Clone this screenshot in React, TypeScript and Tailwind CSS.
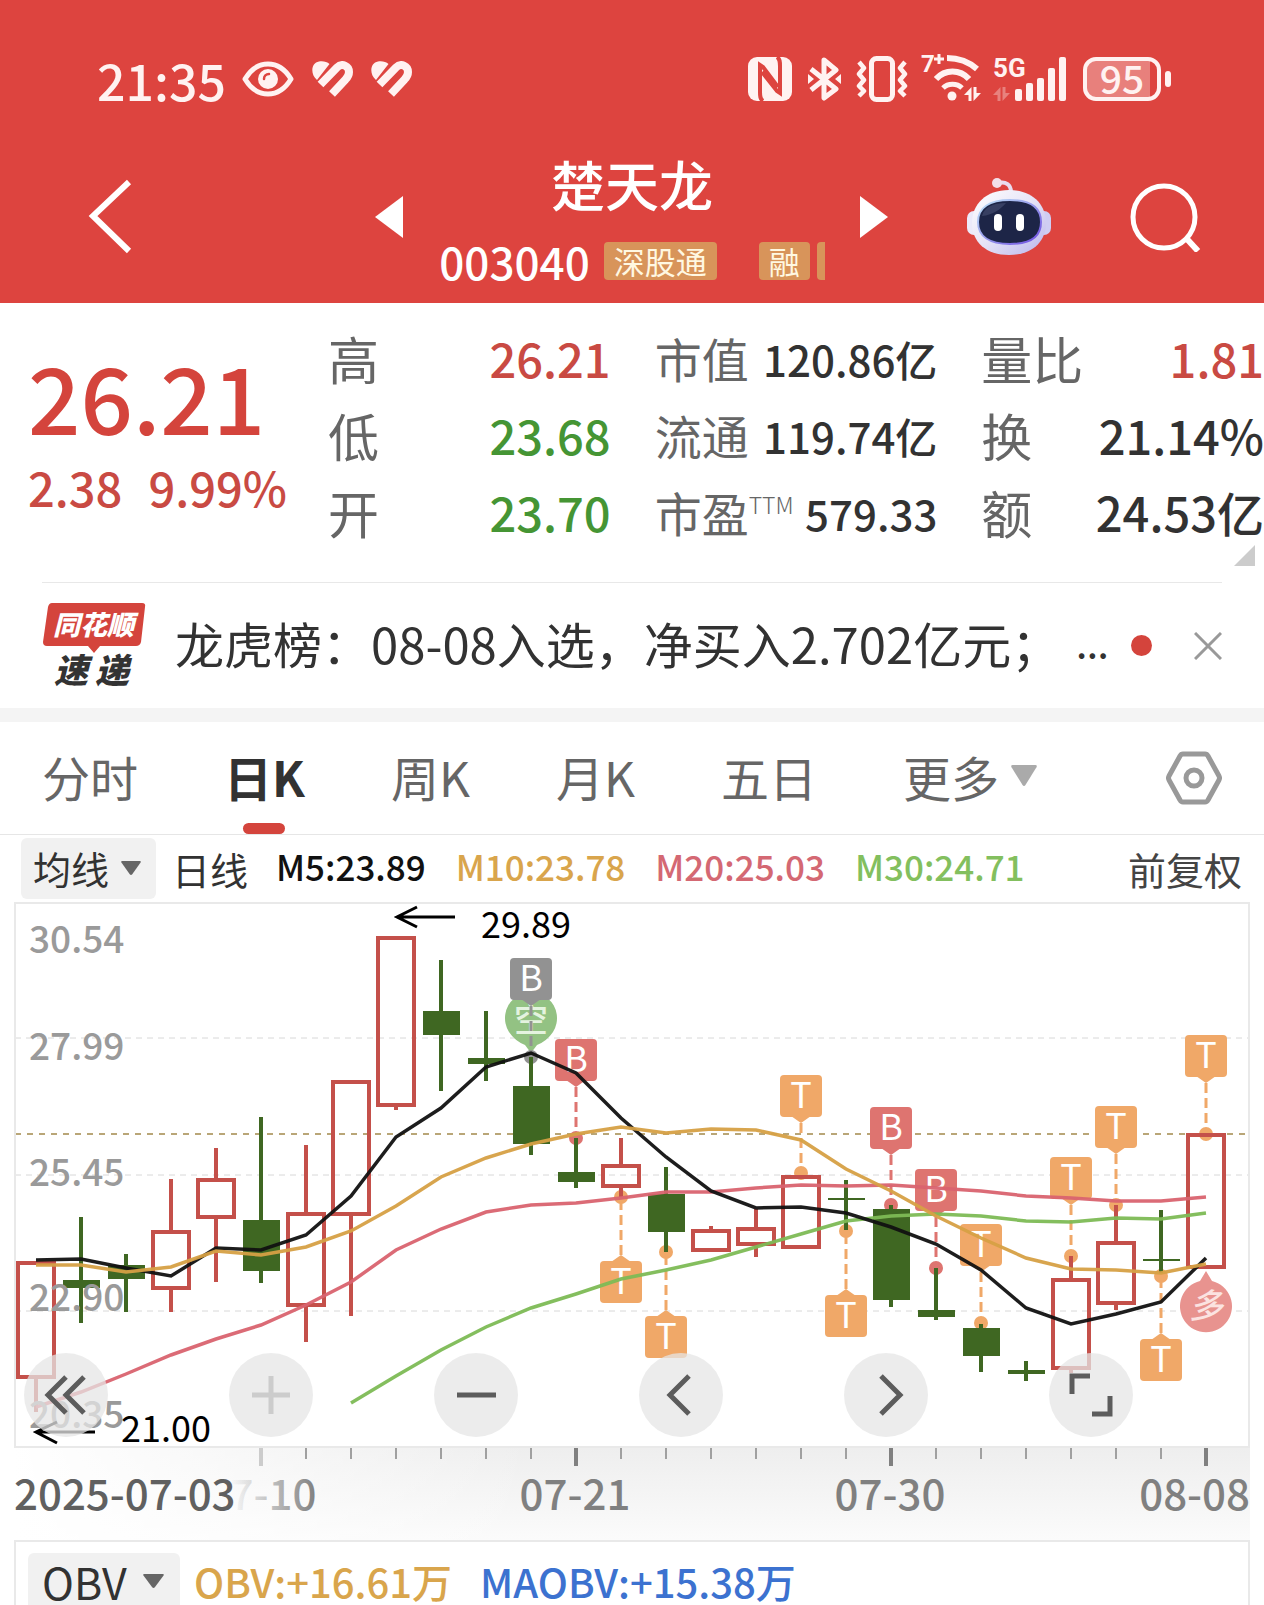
import React, { useState } from 'react';

type Candle = [high: number, top: number, bottom: number, low: number, up: boolean];

interface Flag {
  i: number;
  letter: 'B' | 'T';
  box: number;
  dot: number;
  color: string;
}

const UP = '#c4504a';
const DOWN = '#3f6722';

const STEP = 45;
const x = (i: number) => 21 + i * STEP;

const candles: Candle[] = [
  [360, 360, 474, 509, true],
  [314, 377, 385, 420, false],
  [351, 362, 376, 409, false],
  [276, 329, 385, 409, true],
  [245, 277, 314, 379, true],
  [214, 317, 368, 380, false],
  [242, 311, 402, 439, true],
  [179, 179, 311, 413, true],
  [35, 35, 202, 207, true],
  [57, 108, 132, 188, false],
  [108, 155, 161, 178, false],
  [154, 183, 241, 252, false],
  [235, 269, 279, 285, false],
  [235, 263, 283, 294, true],
  [264, 291, 329, 349, false],
  [323, 328, 347, 347, true],
  [306, 326, 341, 354, true],
  [274, 274, 344, 344, true],
  [277, 295, 297, 327, false],
  [302, 306, 397, 404, false],
  [365, 407, 414, 417, false],
  [421, 425, 453, 469, false],
  [458, 467, 471, 478, false],
  [353, 377, 465, 470, true],
  [302, 340, 400, 407, true],
  [307, 356, 358, 370, false],
  [232, 232, 364, 364, true],
];

const averages = [
  {
    color: '#d9636f',
    start: 0,
    values: [504, 489, 471, 452, 436, 422, 402, 379, 347, 326, 309, 302, 300, 295, 289, 289, 285, 282, 283, 282, 285, 288, 293, 295, 298, 298, 294],
  },
  {
    color: '#7dbb55',
    start: 7,
    values: [500, 473, 447, 424, 405, 391, 376, 367, 357, 344, 331, 318, 313, 311, 313, 318, 319, 315, 316, 310],
  },
  {
    color: '#111111',
    start: 0,
    values: [357, 356, 365, 373, 345, 347, 332, 293, 234, 205, 164, 150, 170, 215, 254, 288, 305, 304, 310, 324, 341, 367, 405, 421, 411, 399, 355],
  },
  {
    color: '#d6a045',
    start: 0,
    values: [362, 362, 369, 364, 348, 352, 344, 328, 303, 274, 255, 241, 231, 224, 230, 226, 227, 237, 266, 288, 313, 335, 355, 366, 367, 370, 361],
  },
];

const flags: Flag[] = [
  { i: 11, letter: 'B', box: 55, dot: 154, color: '#929292' },
  { i: 12, letter: 'B', box: 136, dot: 235, color: '#de7470' },
  { i: 13, letter: 'T', box: 358, dot: 294, color: '#f0a868' },
  { i: 14, letter: 'T', box: 413, dot: 349, color: '#f0a868' },
  { i: 17, letter: 'T', box: 172, dot: 270, color: '#f0a868' },
  { i: 18, letter: 'T', box: 392, dot: 328, color: '#f0a868' },
  { i: 19, letter: 'B', box: 204, dot: 302, color: '#de7470' },
  { i: 20, letter: 'B', box: 266, dot: 365, color: '#de7470' },
  { i: 21, letter: 'T', box: 321, dot: 420, color: '#f0a868' },
  { i: 23, letter: 'T', box: 254, dot: 353, color: '#f0a868' },
  { i: 24, letter: 'T', box: 203, dot: 302, color: '#f0a868' },
  { i: 25, letter: 'T', box: 436, dot: 373, color: '#f0a868' },
  { i: 26, letter: 'T', box: 132, dot: 231, color: '#f0a868' },
];

const priceLabels = [
  { text: '30.54', y: 50 },
  { text: '27.99', y: 157 },
  { text: '25.45', y: 283 },
  { text: '22.90', y: 408 },
  { text: '20.35', y: 525 },
];

const quotes = [
  {
    labelSize: 'text-[51px]',
    valueSize: 'text-[47px]',
    rows: [
      { label: '高', value: '26.21', color: 'text-[#c94a43]' },
      { label: '低', value: '23.68', color: 'text-[#459534]' },
      { label: '开', value: '23.70', color: 'text-[#459534]' },
    ],
  },
  {
    labelSize: 'text-[47px]',
    valueSize: 'text-[42px]',
    rows: [
      { label: '市值', value: '120.86亿', color: 'text-[#323232]' },
      { label: '流通', value: '119.74亿', color: 'text-[#323232]' },
      { label: '市盈', sup: 'TTM', value: '579.33', color: 'text-[#323232]' },
    ],
  },
  {
    labelSize: 'text-[51px]',
    valueSize: 'text-[47px]',
    rows: [
      { label: '量比', value: '1.81', color: 'text-[#c94a43]' },
      { label: '换', value: '21.14%', color: 'text-[#323232]' },
      { label: '额', value: '24.53亿', color: 'text-[#323232]' },
    ],
  },
];

const tabs = ['分时', '日K', '周K', '月K', '五日'];

const Caret = ({ className }: { className?: string }) => (
  <svg viewBox="0 0 24 18" className={className} preserveAspectRatio="none" fill="currentColor" aria-hidden="true">
    <path d="M1.500 0h21q2 0 1 2L13.500 17q-1.500 2-3 0L.5 2q-1-2 1-2z" />
  </svg>
);

const HeartStripes = () => (
  <svg width="41" height="36" viewBox="0 0 41 36" fill="none" aria-hidden="true">
    <path d="M5 19C-2 13-1 2 7 .5c4-.8 8 .3 10.500 2.500z" fill="#fff2f1" />
    <path d="M8.500 23.500 25 6.500c5-5 12-1.500 12 4.500 0 3-1.500 5.500-3.500 7.500L20 33" stroke="#fff2f1" strokeWidth="8" />
  </svg>
);

const DataArrows = ({ className }: { className?: string }) => (
  <svg width="17" height="14" viewBox="0 0 17 14" className={className} fill="currentColor" aria-hidden="true">
    <path d="M7.500 0v14H4.500V8H0zM9.500 0v14L17 6h-4.500V0z" />
  </svg>
);

const StatusBar = () => (
  <div className="flex h-[132px] items-center justify-between pt-[26px] pr-[93px] pl-[97px] text-[#fff2f1]">
    <div className="flex items-center">
      <span className="text-[50px] leading-[60px] font-medium">21:35</span>
      <svg className="ml-4" width="52" height="36" viewBox="0 0 52 36" fill="none" aria-hidden="true">
        <path d="M3 18C9 8 17 3 26 3s17 5 23 15C43 28 35 33 26 33S9 28 3 18z" stroke="currentColor" strokeWidth="5" strokeLinejoin="round" />
        <circle cx="26" cy="18" r="10" fill="currentColor" />
        <path d="M22 18c0-3 2-5 5-5" stroke="#dd443f" strokeWidth="2.500" strokeLinecap="round" />
      </svg>
      <span className="ml-[18px] flex gap-[18px]">
        <HeartStripes />
        <HeartStripes />
      </span>
    </div>

    <div className="flex items-center">
      <svg width="44" height="44" viewBox="0 0 44 44" fill="none" aria-hidden="true">
        <rect width="44" height="44" rx="9" fill="currentColor" />
        <path d="M15 44c-3-2-3-5-3-9V8l3 2 15 20M29 0c3 2 3 5 3 9v27l-3-2L14 15" stroke="#dd443f" strokeWidth="4" />
      </svg>
      <svg className="ml-4" width="33" height="44" viewBox="0 0 33 44" fill="none" aria-hidden="true">
        <path d="M3 12 28 32 16 41V3l12 10L3 33" stroke="currentColor" strokeWidth="5" strokeLinejoin="round" />
        <path d="m0 17 6 5-6 5zM33 17l-6 5 6 5z" fill="currentColor" />
      </svg>
      <svg className="ml-[15px]" width="52" height="46" viewBox="0 0 52 46" fill="none" stroke="currentColor" aria-hidden="true">
        <rect x="15.500" y="2.500" width="21" height="41" rx="5" strokeWidth="5" />
        <path d="m3 6 5 6-5 6 5 6-5 6 5 5-5 5M49 6l-5 6 5 6-5 6 5 6-5 5 5 5" strokeWidth="4.500" strokeLinejoin="round" />
      </svg>
      <div className="relative -mt-1 ml-[14px]">
        <svg className="overflow-visible" width="59" height="48" viewBox="0 0 59 48" fill="none" aria-hidden="true">
          <text x="-1" y="19" fontSize="24" fontFamily="Roboto" fontWeight="700" fill="currentColor">7</text>
          <path d="M17 1v10M12 6h10" stroke="currentColor" strokeWidth="3" />
          <g stroke="currentColor" strokeWidth="6">
            <path d="M25 5c12 0 22 4 30 11" />
            <path d="M14 26c9-10 24-10 33 0" />
            <path d="M21 35c5-5 14-5 19 0" strokeWidth="5" />
          </g>
          <circle cx="30" cy="43" r="4.500" fill="currentColor" />
        </svg>
        <DataArrows className="absolute right-0 bottom-0" />
      </div>
      <div className="relative ml-3">
        <svg className="overflow-visible" width="73" height="44" viewBox="0 0 73 44" fill="currentColor" aria-hidden="true">
          <text x="0" y="20" fontSize="26" fontFamily="Roboto" fontWeight="700">5G</text>
          <rect x="22" y="32" width="7" height="12" rx="2" />
          <rect x="33" y="26" width="7" height="18" rx="2" />
          <rect x="44" y="21" width="7" height="23" rx="2" />
          <rect x="55" y="11" width="7" height="33" rx="2" />
          <rect x="66" y="0" width="7" height="44" rx="2" />
        </svg>
        <DataArrows className="absolute bottom-0 left-0 opacity-35" />
      </div>
      <div className="ml-[17px] flex items-center gap-1">
        <div className="flex h-11 w-[78px] items-center justify-center rounded-[13px] border-4 border-[#fff2f1] bg-linear-to-r from-[#e8807c] from-90% to-[#dd443f] to-90% pb-1 text-[39px] leading-[40px] font-medium">
          95
        </div>
        <div className="h-4 w-[6px] rounded-full bg-[#fff2f1]" />
      </div>
    </div>
  </div>
);

const Robot = () => (
  <svg width="84" height="78" viewBox="0 0 84 78" fill="none" aria-hidden="true">
    <defs>
      <linearGradient id="shell" x1="0" y1="0" x2="1" y2="1">
        <stop offset="0" stopColor="#ffffff" />
        <stop offset=".5" stopColor="#e6e3f6" />
        <stop offset="1" stopColor="#b9b5ec" />
      </linearGradient>
      <linearGradient id="rim" x1="0" y1="0" x2="1" y2="1">
        <stop offset="0" stopColor="#bfe6f7" />
        <stop offset="1" stopColor="#6d4be0" />
      </linearGradient>
    </defs>
    <path d="M31 5c8-2 13 2 13 9" stroke="#e9dcef" strokeWidth="4" />
    <circle cx="30" cy="5" r="5" fill="#f3dfe9" />
    <rect x="0" y="33" width="16" height="24" rx="7" fill="#eceafa" />
    <rect x="68" y="33" width="16" height="24" rx="7" fill="#cfcdf3" />
    <path d="M42 12c23 0 37 14 37 33S65 77 42 77 5 64 5 45s14-33 37-33z" fill="url(#shell)" />
    <path d="M43 22c21 0 31 8 31 22s-10 22-31 22-32-8-32-22 11-22 32-22z" fill="#1d2547" stroke="url(#rim)" strokeWidth="2" />
    <path d="M15 38c2-9 11-13 24-13-6 7-14 12-24 13z" fill="#4a5275" opacity=".6" />
    <rect x="27" y="36" width="8" height="17" rx="4" fill="#fff" />
    <rect x="49" y="36" width="8" height="17" rx="4" fill="#fff" />
  </svg>
);

const NavBar = () => (
  <div className="grid h-[171px] grid-cols-[1fr_auto_1fr] items-center pb-[2px] text-white">
    <div className="flex items-center justify-between pr-9 pl-[88px]">
      <button aria-label="返回">
        <svg width="44" height="76" viewBox="0 0 44 76" fill="none" stroke="currentColor" strokeWidth="6">
          <path d="M41 3 5 37l36 35" />
        </svg>
      </button>
      <button aria-label="上一只">
        <svg width="28" height="42" viewBox="0 0 28 42" fill="currentColor">
          <path d="M28 0v42L0 21z" />
        </svg>
      </button>
    </div>

    <div>
      <h1 className="text-center text-[54px] leading-[60px] font-medium">楚天龙</h1>
      <div className="mt-7 flex h-[38px] items-center">
        <span className="text-[44px] leading-[38px] font-medium">003040</span>
        <span className="ml-[14px] rounded bg-[#d8945a] px-[10px] text-[31px] leading-[38px] text-[#fff8e2]">深股通</span>
        <span className="ml-[42px] rounded bg-[#d8945a] px-[10px] text-[31px] leading-[38px] text-[#fff8e2]">融</span>
        <span className="ml-[7px] h-[38px] w-2 rounded-l bg-[#d8945a]" />
      </div>
    </div>

    <div className="flex items-center justify-between pr-[62px] pl-[35px]">
      <button aria-label="下一只">
        <svg width="28" height="42" viewBox="0 0 28 42" fill="currentColor">
          <path d="M0 0v42l28-21z" />
        </svg>
      </button>
      <button aria-label="智能助手">
        <Robot />
      </button>
      <button aria-label="搜索">
        <svg width="72" height="70" viewBox="0 0 72 70" fill="none" stroke="currentColor" strokeWidth="5">
          <circle cx="34" cy="35" r="31" />
          <path d="m56 56 12 13" strokeWidth="6" />
        </svg>
      </button>
    </div>
  </div>
);

const QuotePanel = () => (
  <section className="relative grid grid-cols-[256px_1fr_1fr_1fr] gap-x-11 pt-[17px] pb-[31px] pl-7">
    <div className="pt-[25px] font-medium whitespace-nowrap text-[#d4443c]">
      <p className="text-[92px] leading-[100px]">26.21</p>
      <p className="mt-3 flex gap-[26px] text-[47px] leading-[60px] text-[#c94a43]">
        <span>2.38</span>
        <span>9.99%</span>
      </p>
    </div>
    {quotes.map((column, index) => (
      <dl key={index}>
        {column.rows.map(row => (
          <div key={row.label} className="flex h-[77px] items-center justify-between whitespace-nowrap">
            <dt className={`flex text-[#666666] ${column.labelSize}`}>
              {row.label}
              {row.sup && <sup className="top-0 pt-3 text-[23px] leading-[30px] font-light">{row.sup}</sup>}
            </dt>
            <dd className={`font-medium ${column.valueSize} ${row.color}`}>{row.value}</dd>
          </div>
        ))}
      </dl>
    ))}
    <svg className="absolute right-[9px] bottom-4" width="21" height="21" viewBox="0 0 21 21" aria-hidden="true">
      <path d="M21 0v21H0z" fill="#cccccc" />
    </svg>
  </section>
);

const NewsBar = () => (
  <section>
    <div className="mx-[42px] flex h-[126px] items-center border-t border-[#e8e8e8]">
      <svg className="overflow-visible" width="104" height="84" viewBox="-1 1 104 84" aria-hidden="true">
        <path d="M9 0h90q4 0 3 4l-4 35q-1 4-5 4H57l-6 7-6-7H4q-4 0-4-4L5 4q1-4 4-4z" fill="#d4443c" />
        <text x="10" y="32" fontSize="27" fontWeight="900" fontStyle="italic" fill="#fff">同花顺</text>
        <g fontSize="34" fontWeight="900" fontStyle="italic" fill="#333">
          <text x="11" y="80">速</text>
          <text x="52" y="80">递</text>
        </g>
      </svg>
      <a href="#news" className="ml-[29px] flex flex-1 pb-[6px] text-[49px] leading-[60px] whitespace-nowrap text-[#323232]">
        龙虎榜：08-08入选，净买入2.702亿元；<span className="ml-4 text-[36px] font-medium">...</span>
      </a>
      <span className="h-[21px] w-[21px] rounded-full bg-[#d4443c]" />
      <button aria-label="关闭" className="ml-[42px]">
        <svg width="28" height="28" viewBox="0 0 28 28" fill="none" stroke="#999999" strokeWidth="3">
          <path d="m1 1 26 26M27 1 1 27" />
        </svg>
      </button>
    </div>
    <div className="h-[14px] bg-[#f4f4f4]" />
  </section>
);

const PeriodTabs = () => {
  const [active, setActive] = useState('日K');

  return (
    <nav className="flex h-[113px] items-center justify-between border-b border-[#e6e6e6] pr-[42px] pl-[42px] text-[48px] text-[#666666]">
      <div className="flex h-full gap-[86px]">
        {tabs.map(tab => (
          <button
            key={tab}
            onClick={() => setActive(tab)}
            className={`relative pb-[5px] whitespace-nowrap ${active === tab ? 'font-bold text-[#323232]' : ''}`}
          >
            {tab}
            {active === tab && (
              <span className="absolute bottom-0 left-1/2 h-[11px] w-[42px] -translate-x-1/2 rounded-full bg-[#d4443c]" />
            )}
          </button>
        ))}
        <button className="flex items-center gap-3 pb-[5px] whitespace-nowrap">
          更多
          <Caret className="h-[21px] w-[26px] text-[#aaaaaa]" />
        </button>
      </div>
      <button aria-label="图表设置">
        <svg width="56" height="54" viewBox="0 0 56 54" fill="none" stroke="#999999" strokeWidth="5" strokeLinejoin="round">
          <path d="M17 3h22q2 0 3 2l11 20q1 2 0 4L42 49q-1 2-3 2H17q-2 0-3-2L3 29q-1-2 0-4L14 5q1-2 3-2z" />
          <circle cx="28" cy="27" r="8" />
        </svg>
      </button>
    </nav>
  );
};

const AverageBar = () => (
  <div className="flex h-[67px] items-center pr-[22px] pl-[21px] text-[35px] font-medium whitespace-nowrap">
    <div className="relative">
      <select
        aria-label="指标"
        className="h-[61px] w-[135px] appearance-none rounded-md bg-[#f1f1f1] pb-[2px] pl-3 text-[38px] font-normal text-[#323232]"
      >
        <option>均线</option>
      </select>
      <Caret className="pointer-events-none absolute top-[23px] right-[15px] h-[14px] w-5 text-[#666666]" />
    </div>
    <span className="ml-4 text-[38px] font-normal text-[#323232]">日线</span>
    <div className="ml-7 flex gap-[30px] pb-1">
      <span className="text-[#111111]">M5:23.89</span>
      <span className="text-[#d9a54c]">M10:23.78</span>
      <span className="text-[#d46873]">M20:25.03</span>
      <span className="text-[#83bf5e]">M30:24.71</span>
    </div>
    <button className="ml-auto text-[38px] font-normal text-[#444444]">前复权</button>
  </div>
);

const FlagMark = ({ flag }: { flag: Flag }) => {
  const cx = x(flag.i);
  const above = flag.box < flag.dot;
  const tip = above ? flag.box + 48 : flag.box - 6;

  return (
    <g>
      <path d={`M${cx} ${tip}V${flag.dot}`} stroke={flag.color} strokeWidth="3" strokeDasharray="10 5" />
      <circle cx={cx} cy={flag.dot} r="7" fill={flag.color} />
      <rect x={cx - 21} y={flag.box} width="42" height="42" rx="4" fill={flag.color} />
      <path
        d={above ? `M${cx - 10} ${flag.box + 41}h20l-10 7z` : `M${cx - 10} ${flag.box + 1}h20l-10-7z`}
        fill={flag.color}
      />
      <text x={cx} y={flag.box + 33} fontSize="36" textAnchor="middle" fill="#fff">{flag.letter}</text>
    </g>
  );
};

const CandleMark = ({ candle, i }: { candle: Candle; i: number }) => {
  const [high, top, bottom, low, up] = candle;
  const cx = x(i);

  return up ? (
    <g stroke={UP} strokeWidth="4" fill="none">
      <path d={`M${cx} ${high}V${top}M${cx} ${bottom}V${low}`} />
      <rect x={cx - 18} y={top} width="36" height={bottom - top} />
    </g>
  ) : (
    <g fill={DOWN}>
      <rect x={cx - 2} y={high} width="4" height={low - high} />
      <rect x={cx - 18} y={top} width="37" height={bottom - top} />
    </g>
  );
};

const ChartControls = () => (
  <div className="absolute right-[115px] bottom-[9px] left-[8px] flex justify-between">
    {[
      { label: '最早', path: 'M23 5 5 23l18 18M41 5 23 23l18 18', muted: false },
      { label: '放大', path: 'M23 4v38M4 23h38', muted: true },
      { label: '缩小', path: 'M4 23h39', muted: false },
      { label: '左移', path: 'M31 4 12 23l19 19', muted: false },
      { label: '右移', path: 'm18 4 19 19-19 19', muted: false },
      { label: '全屏', path: 'M4 22V4h18M42 24v18H24', muted: false },
    ].map(control => (
      <button
        key={control.label}
        aria-label={control.label}
        className="flex h-[84px] w-[84px] items-center justify-center rounded-full bg-[#e6e6e6]/75"
      >
        <svg width="46" height="46" viewBox="0 0 46 46" fill="none" stroke={control.muted ? '#cccccc' : '#5c5c5c'} strokeWidth="5">
          <path d={control.path} />
        </svg>
      </button>
    ))}
  </div>
);

const CandleChart = () => (
  <div className="relative border-2 border-[#e9e9e9]">
    <svg viewBox="1 1 1232 542" className="block h-auto w-full" role="img" aria-label="日K线图">
      <g stroke="#d8d8d8" strokeWidth="1" strokeDasharray="6 5">
        <path d="M0 135H1234M0 272H1234M0 408H1234" />
      </g>
      <path d="M0 231H1230" stroke="#b9a677" strokeWidth="2" strokeDasharray="6 6" />

      {/* short / long signal pins */}
      <g fontSize="34" fontWeight="500" textAnchor="middle">
        <path d={`M${x(11) - 22} 129a26 26 0 1 1 44 0q-6 9-16 13l-6 8-6-8q-10-4-16-13z`} fill="#93c283" />
        <text x={x(11)} y="129" fill="#e4f3df">空</text>
        <path d={`M${x(26)} 368l6 10a26 26 0 1 1-12 0z`} fill="#e8938f" />
        <text x={x(26)} y="415" fontStyle="italic" fill="#fbe3e1">多</text>
      </g>

      {flags.map(flag => (
        <FlagMark key={flag.i} flag={flag} />
      ))}
      {candles.map((candle, i) => (
        <CandleMark key={i} candle={candle} i={i} />
      ))}
      {averages.map(line => (
        <polyline
          key={line.color}
          points={line.values.map((y, i) => `${x(line.start + i)},${y}`).join(' ')}
          fill="none"
          stroke={line.color}
          strokeOpacity=".95"
          strokeWidth="3.500"
        />
      ))}

      <g fontSize="37" fontWeight="500" fill="#9a9a9a">
        {priceLabels.map(label => (
          <text key={label.text} x="14" y={label.y}>{label.text}</text>
        ))}
      </g>

      {/* highest and lowest price in range */}
      <g stroke="#000" strokeWidth="3" fill="none">
        <path d="M440 14H382M402 4l-20 10 20 10" />
        <path d="M80 529H21M42 519l-21 10 21 11" />
      </g>
      <g fontSize="36" fill="#000">
        <text x="466" y="35">29.89</text>
        <text x="106" y="539">21.00</text>
      </g>
    </svg>
    <ChartControls />
  </div>
);

const DateAxis = () => (
  <div className="bg-linear-to-b from-[#eeeeee] to-[#fbfbfb]">
    <svg viewBox="0 0 1236 92" className="block h-auto w-full" role="img" aria-label="日期">
      <defs>
        <linearGradient id="axis-fade">
          <stop offset="0" stopColor="#fff" />
          <stop offset="1" stopColor="#fff" stopOpacity="0" />
        </linearGradient>
        <linearGradient id="date-fade">
          <stop offset=".22" stopColor="#808080" stopOpacity="0" />
          <stop offset="1" stopColor="#808080" />
        </linearGradient>
      </defs>
      <rect width="520" height="92" fill="url(#axis-fade)" />
      {candles.map((_, i) => {
        if (i < 5) return null;
        const major = (i - 5) % 7 === 0;
        return (
          <rect
            key={i}
            x={x(i) + (major ? -1 : 0)}
            y="0"
            width={major ? 4 : 2}
            height={major ? 18 : 11}
            fill={i === 5 ? '#cccccc' : major ? '#808080' : '#a0a0a0'}
          />
        );
      })}
      <g fontSize="42" fontWeight="500" fill="#808080">
        <text x={x(5) + 1} y="62" textAnchor="middle" fill="url(#date-fade)">07-10</text>
        <text x="0" y="62" fill="#606060">2025-07-03</text>
        <text x={x(12)} y="62" textAnchor="middle">07-21</text>
        <text x={x(19)} y="62" textAnchor="middle">07-30</text>
        <text x="1236" y="62" textAnchor="end">08-08</text>
      </g>
    </svg>
  </div>
);

const ObvPanel = () => (
  <div className="flex h-[65px] items-end overflow-hidden border-x-2 border-t-2 border-[#e9e9e9] pl-3 text-[40px] font-medium whitespace-nowrap">
    <div className="relative">
      <select
        aria-label="副图指标"
        className="block h-[52px] w-[152px] appearance-none rounded-t-md bg-[#f1f1f1] pt-1 pl-[14px] text-[43px] leading-[48px] font-normal text-[#323232]"
      >
        <option>OBV</option>
      </select>
      <Caret className="pointer-events-none absolute top-[21px] right-4 h-[14px] w-[21px] text-[#666666]" />
    </div>
    <span className="ml-[14px] leading-[48px] text-[#d9a54c]">OBV:+16.61万</span>
    <span className="ml-7 leading-[48px] text-[#3c72d0]">MAOBV:+15.38万</span>
  </div>
);

export default function App() {
  return (
    <div className="overflow-hidden bg-white font-['Noto_Sans_CJK_SC',sans-serif]">
      <header className="bg-[#dd443f]">
        <StatusBar />
        <NavBar />
      </header>
      <main>
        <QuotePanel />
        <NewsBar />
        <PeriodTabs />
        <AverageBar />
        <div className="mx-[14px]">
          <CandleChart />
          <DateAxis />
          <ObvPanel />
        </div>
      </main>
    </div>
  );
}
